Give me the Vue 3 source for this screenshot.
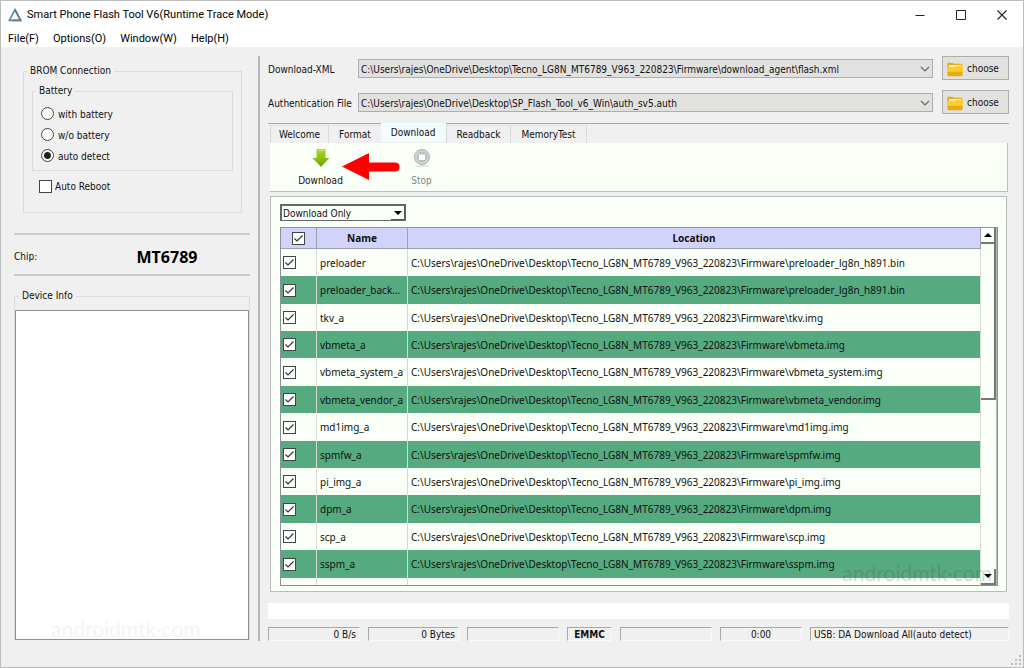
<script setup>
import { ref } from 'vue'

const menus = ['File(F)', 'Options(O)', 'Window(W)', 'Help(H)']
const batteryModes = ['with battery', 'w/o battery', 'auto detect']
const battery = ref('auto detect')
const autoReboot = ref(false)
const tabs = ['Welcome', 'Format', 'Download', 'Readback', 'MemoryTest']
const activeTab = ref('Download')

const files = [
  { id: 'xml', label: 'Download-XML', path: 'C:\\Users\\rajes\\OneDrive\\Desktop\\Tecno_LG8N_MT6789_V963_220823\\Firmware\\download_agent\\flash.xml' },
  { id: 'auth', label: 'Authentication File', path: 'C:\\Users\\rajes\\OneDrive\\Desktop\\SP_Flash_Tool_v6_Win\\auth_sv5.auth' },
]

const base = 'C:\\Users\\rajes\\OneDrive\\Desktop\\Tecno_LG8N_MT6789_V963_220823\\Firmware\\'
const rows = ref([
  ['preloader', 'preloader_lg8n_h891.bin'],
  ['preloader_back...', 'preloader_lg8n_h891.bin'],
  ['tkv_a', 'tkv.img'],
  ['vbmeta_a', 'vbmeta.img'],
  ['vbmeta_system_a', 'vbmeta_system.img'],
  ['vbmeta_vendor_a', 'vbmeta_vendor.img'],
  ['md1img_a', 'md1img.img'],
  ['spmfw_a', 'spmfw.img'],
  ['pi_img_a', 'pi_img.img'],
  ['dpm_a', 'dpm.img'],
  ['scp_a', 'scp.img'],
  ['sspm_a', 'sspm.img'],
].map(([name, file]) => ({ name, file, checked: true })))
const allChecked = ref(true)
</script>

<template>
  <div class="window">
    <header class="titlebar">
      <svg class="logo" viewBox="0 0 14 14" width="14" height="14">
        <path d="M7 1.6 1.4 12.4h11.2z" fill="#fff" stroke="#4d93b3" stroke-width="1.7" />
        <path d="M7 1.6 12.6 12.4H4" fill="none" stroke="#6b7880" stroke-width="1.7" />
      </svg>
      <h1>Smart Phone Flash Tool V6(Runtime Trace Mode)</h1>
      <div class="controls">
        <button aria-label="Minimize"><svg width="12" height="12" viewBox="0 0 12 12"><path d="M1.500 6.500h9" stroke="#222" fill="none" /></svg></button>
        <button aria-label="Maximize"><svg width="12" height="12" viewBox="0 0 12 12"><path d="M1.500 1.500h9v9h-9z" stroke="#222" fill="none" /></svg></button>
        <button aria-label="Close"><svg width="12" height="12" viewBox="0 0 12 12"><path d="M1.500 1.500l9 9M10.500 1.500l-9 9" stroke="#222" stroke-width="1.100" fill="none" /></svg></button>
      </div>
    </header>
    <nav class="menubar">
      <button v-for="m in menus" :key="m">{{ m }}</button>
    </nav>

    <main class="body">
      <aside class="side">
        <fieldset class="brom">
          <legend>BROM Connection</legend>
          <fieldset class="battery">
            <legend>Battery</legend>
            <label v-for="m in batteryModes" :key="m">
              <input v-model="battery" type="radio" name="battery" :value="m" /><span>{{ m }}</span>
            </label>
          </fieldset>
          <label class="reboot"><input v-model="autoReboot" class="tick" type="checkbox" /><span>Auto Reboot</span></label>
        </fieldset>
        <div class="chip">
          <span>Chip:</span>
          <strong>MT6789</strong>
        </div>
        <fieldset class="device">
          <legend id="device-info">Device Info</legend>
          <div class="device-box">
            <textarea aria-labelledby="device-info" readonly></textarea>
            <span class="mark">androidmtk·com</span>
          </div>
        </fieldset>
      </aside>

      <section class="content">
        <div class="files">
          <div v-for="f in files" :key="f.id" class="file">
            <label :for="f.id">{{ f.label }}</label>
            <div class="combo">
              <select :id="f.id"><option>{{ f.path }}</option></select>
              <svg width="10" height="6" viewBox="0 0 10 6"><path d="M1 1l4 4 4-4" fill="none" stroke="#666" stroke-width="1.200" /></svg>
            </div>
            <button class="choose">
              <svg width="16" height="15" viewBox="0 0 16 15">
                <path d="M.3 2Q.3.800 1.500.800H5.500l1 1h7.800q1 0 1 1V9H.3z" fill="#e8a917" />
                <path d="M2 3h12.300v2H2z" fill="#fff3c0" />
                <path d="M.3 5h7l1.500-1h6.900v6H.3z" fill="#fbce2c" />
                <path d="M.3 9.800h15.400v3q0 1.400-1.400 1.400H1.700Q.3 14.200.3 12.800z" fill="#e6ad10" />
              </svg>
              choose
            </button>
          </div>
        </div>

        <div class="tabs" role="tablist">
          <button v-for="t in tabs" :key="t" role="tab" :aria-selected="t === activeTab" :class="{ active: t === activeTab }" @click="activeTab = t">{{ t }}</button>
        </div>

        <div class="toolbar">
          <button class="tool">
            <svg width="20" height="20" viewBox="0 0 20 20">
              <defs><linearGradient id="leaf" x1="0" y1="0" x2="0" y2="1"><stop offset="0" stop-color="#b3d81f" /><stop offset=".5" stop-color="#8cc015" /><stop offset="1" stop-color="#6ba80b" /></linearGradient></defs>
              <path d="M5.500 1h9v9h4L10 19 1.500 10h4z" fill="url(#leaf)" />
              <path d="M7 2.500h6" stroke="#d3e96a" />
            </svg>
            <span>Download</span>
          </button>
          <svg class="arrow" width="58" height="28" viewBox="0 0 58 28">
            <path d="M0 13.500 27 0v9.500h26q4.500 0 4.500 4.500T53 18.500H27V27z" fill="#fe0000" />
          </svg>
          <button class="tool stop" disabled>
            <svg width="20" height="20" viewBox="0 0 20 20">
              <ellipse cx="10" cy="18" rx="7" ry="1" fill="#e2e5e0" />
              <circle cx="10" cy="9" r="7.500" fill="#d6d6d6" stroke="#adadad" />
              <circle cx="10" cy="9" r="5.500" fill="#bfbfbf" />
              <path d="M7 6.500h6v5.500H7z" fill="#fff" />
            </svg>
            <span>Stop</span>
          </button>
        </div>

        <div class="panel">
          <div class="mode">
            <select aria-label="Download mode"><option>Download Only</option></select>
            <svg width="14" height="14" viewBox="0 0 14 14"><path d="M0 13.500h13.500V0" fill="none" stroke="#555" /><path d="M3 5h8L7 9z" fill="#000" /></svg>
          </div>
          <div class="grid">
            <table>
              <colgroup><col class="c-check" /><col class="c-name" /><col /></colgroup>
              <thead>
                <tr>
                  <th><input v-model="allChecked" class="tick" type="checkbox" aria-label="Select all" /></th>
                  <th>Name</th>
                  <th>Location</th>
                </tr>
              </thead>
              <tbody>
                <tr v-for="(r, i) in rows" :key="i">
                  <td><input v-model="r.checked" class="tick" type="checkbox" :aria-label="r.name" /></td>
                  <td>{{ r.name }}</td>
                  <td>{{ base + r.file }}</td>
                </tr>
                <tr class="rest"><td></td><td></td><td></td></tr>
              </tbody>
            </table>
            <div class="scroll">
              <button aria-label="Scroll up"><svg width="8" height="4" viewBox="0 0 8 4"><path d="M0 4h8L4 0z" /></svg></button>
              <div class="thumb"></div>
              <div class="track"></div>
              <button aria-label="Scroll down"><svg width="8" height="4" viewBox="0 0 8 4"><path d="M0 0h8L4 4z" /></svg></button>
            </div>
            <span class="mark mark-dark">androidmtk·com</span>
          </div>
        </div>

        <div class="progress"></div>
        <footer class="status">
          <span class="right">0 B/s</span>
          <span class="right">0 Bytes</span>
          <span></span>
          <b>EMMC</b>
          <span></span>
          <span class="center">0:00</span>
          <span>USB: DA Download All(auto detect)</span>
        </footer>
      </section>
    </main>
    <svg class="grip" width="11" height="11" viewBox="0 0 11 11" fill="#bdbdbd">
      <path d="M8 0h2v2H8zM4 4h2v2H4zM8 4h2v2H8zM0 8h2v2H0zM4 8h2v2H4zM8 8h2v2H8z" />
    </svg>
  </div>
</template>

<style>
body { margin: 0; background: #f0f0f0; }
</style>

<style scoped>
* { box-sizing: border-box; }
.window {
  position: relative;
  display: flex;
  flex-direction: column;
  min-height: 100vh;
  border: 1px solid #bcbcbc;
  background: #f0f0f0;
  color: #111;
  font: 10px/14px "DejaVu Sans Condensed", "DejaVu Sans", sans-serif;
}
button, select, textarea, input { margin: 0; padding: 0; border: 0; background: none; color: inherit; font: inherit; }
svg { display: block; flex: none; }
fieldset { margin: 0; min-width: 0; border: 1px solid #dcdcdc; padding: 0; }
legend { padding: 0 3px; margin-left: 3px; }

.titlebar, .menubar { display: flex; align-items: center; background: #fff; font-family: Roboto, sans-serif; color: #000; }
.titlebar { height: 27px; padding-left: 7px; gap: 5px; font-size: 11px; }
h1 { margin: 0; font: inherit; }
.controls { display: flex; margin-left: auto; padding-right: 1px; }
.controls button { display: grid; place-items: center; width: 41px; height: 26px; }
.menubar { height: 19px; padding: 2px 0 0 7px; gap: 14px; font-size: 11px; }

.body { flex: 1; display: grid; grid-template-columns: 246px 1fr; padding: 9px 14px 26px 13px; }
.side { display: flex; flex-direction: column; border-right: 2px solid #b4b4b4; padding: 8px 8px 1px 0; }
.brom { margin: 0 8px 0 9px; height: 149px; padding: 6px 0 0; }
.battery { height: 87px; margin: 0 8px; padding: 5px 0 0; }
.battery label { display: flex; align-items: center; gap: 4px; height: 21px; margin-left: 8px; }
label span { padding-top: 2px; }
input[type="radio"] { appearance: none; width: 13px; height: 13px; border: 1px solid #444; border-radius: 50%; background: #fff; }
input[type="radio"]:checked { background: radial-gradient(circle, #222 3px, #fff 4px); }
.tick { appearance: none; display: block; width: 13px; height: 13px; border: 1px solid #444; background: #fff; }
.tick:checked { background: #fff url("data:image/svg+xml,%3Csvg xmlns='http://www.w3.org/2000/svg' viewBox='0 0 11 11'%3E%3Cpath d='M1.500 5.500l2.500 2.500 5.500-5.500' fill='none' stroke='%23333' stroke-width='1.200'/%3E%3C/svg%3E"); }
.reboot { display: flex; align-items: center; gap: 3px; margin: 7px 0 0 15px; }
.chip { display: grid; grid-template-columns: 70px 1fr; align-items: center; height: 43px; margin-top: 20px; padding-top: 4px; border: solid #cbcbcb; border-width: 2px 0; }
.chip strong { justify-self: center; font: bold 16px/20px "Noto Sans", sans-serif; color: #000; }
.device { flex: 1; display: flex; margin-top: 13px; border-bottom: 0; padding-top: 7px; }
.device legend { margin-left: 4px; }
.device-box { position: relative; flex: 1; display: flex; height: 100%; }
textarea { flex: 1; resize: none; border: 1px solid #8c8f94; background: #fff; outline: 0; }
.mark { position: absolute; left: 36px; bottom: 1px; font: 21px/20px Lato, sans-serif; color: #f1f4f3; pointer-events: none; }

.content { display: flex; flex-direction: column; padding-left: 8px; }
.files { display: grid; gap: 10px; }
.file { display: grid; grid-template-columns: 81px 1fr 67px; column-gap: 9px; align-items: center; height: 24px; }
.file label { padding-top: 4px; white-space: nowrap; }
.combo { position: relative; display: flex; }
.combo select { appearance: none; width: 100%; height: 19px; padding: 3px 0 0 2px; border: 1px solid #adadad; background: #e1e1e0; }
.combo svg { position: absolute; right: 3px; top: 7px; }
.choose { display: flex; align-items: center; gap: 4px; height: 24px; padding: 2px 0 0 4px; border: 1px solid #adadad; background: #e1e1e0; }

.tabs { display: flex; height: 20px; margin-top: 9px; border-top: 1px solid #a9a9a9; padding-left: 2px; }
.tabs button { height: 18px; margin-top: 1px; padding: 0 10px; border-left: 1px solid #d9d9d9; border-top: 1px solid #e4e4e4; }
.tabs button:first-child { padding: 0 8px; }
.tabs button:last-child { border-right: 1px solid #d9d9d9; }
.tabs .active { height: 19px; margin-top: -1px; background: #f2fcff; border: 0; }
.toolbar { display: flex; height: 49px; margin: 0 1px 0 2px; border: solid #bcc0ba; border-width: 0 1px 1px 0; background: #fafff8; }
.tool { display: flex; flex-direction: column; align-items: center; gap: 6px; width: 101px; padding-top: 5px; }
.arrow { margin: 10px -29px 0; position: relative; }
.stop { color: #858a80; }

.panel { flex: 1; margin: 4px 2px 0; padding: 7px 8px 5px 9px; border: 1px solid #b9bdb7; background: #fafff8; display: flex; flex-direction: column; gap: 6px; }
.mode { position: relative; width: 126px; }
.mode select { display: block; appearance: none; width: 100%; height: 17px; padding: 1px 0 0 1px; border: 1px solid #666; border-width: 2px 1px 1px 2px; }
.mode svg { position: absolute; right: 1px; top: 2px; }
.grid { position: relative; flex: 1; display: flex; border: 1px solid #8a9098; }
table { flex: 1; width: 100%; min-width: 0; border-collapse: separate; border-spacing: 0; table-layout: fixed; font-family: "Noto Sans", sans-serif; }
.c-check { width: 36px; }
.c-name { width: 91px; }
th { height: 21px; padding: 0; background: #d1d3fb; border-right: 1px solid #9da0b4; border-bottom: 1px solid #9da0b4; font-weight: bold; }
th .tick { margin: 0 auto; }
td { height: 27px; padding: 0 2px; border-right: 1px solid #d4dad2; overflow: hidden; white-space: nowrap; text-overflow: ellipsis; }
td + td { padding: 0 1px 0 3px; }
tbody tr:nth-child(5n) td, tbody tr:nth-child(5n + 2) td { height: 28px; }
tbody tr:nth-child(even) td { background: #55aa7f; }
tbody .rest td { height: auto; }
.scroll { flex: none; display: flex; flex-direction: column; width: 16px; border-right: 1px solid #b4b8b2; }
.scroll button { display: grid; place-items: center; height: 16px; border: solid #777; border-width: 0 2px 2px 0; }
.thumb { height: 156px; border: solid #777; border-width: 0 2px 2px 0; }
.track { flex: 1; }
.mark-dark { left: auto; right: 5px; bottom: 2px; color: rgba(60, 80, 70, .22); }

.progress { height: 16px; margin-top: 11px; background: #fff; }
.status { display: grid; grid-template-columns: 92px 91px 92px 45px 92px 82px 1fr; gap: 8px; margin-top: 8px; }
.status > * { height: 14px; padding: 0 3px; border: 1px solid #a8a8a8; border-right-color: #fafafa; border-bottom-color: #fafafa; white-space: nowrap; }
.status .right { text-align: right; }
.status .center, .status b { text-align: center; }
.grip { position: absolute; right: 1px; bottom: 1px; }
</style>
